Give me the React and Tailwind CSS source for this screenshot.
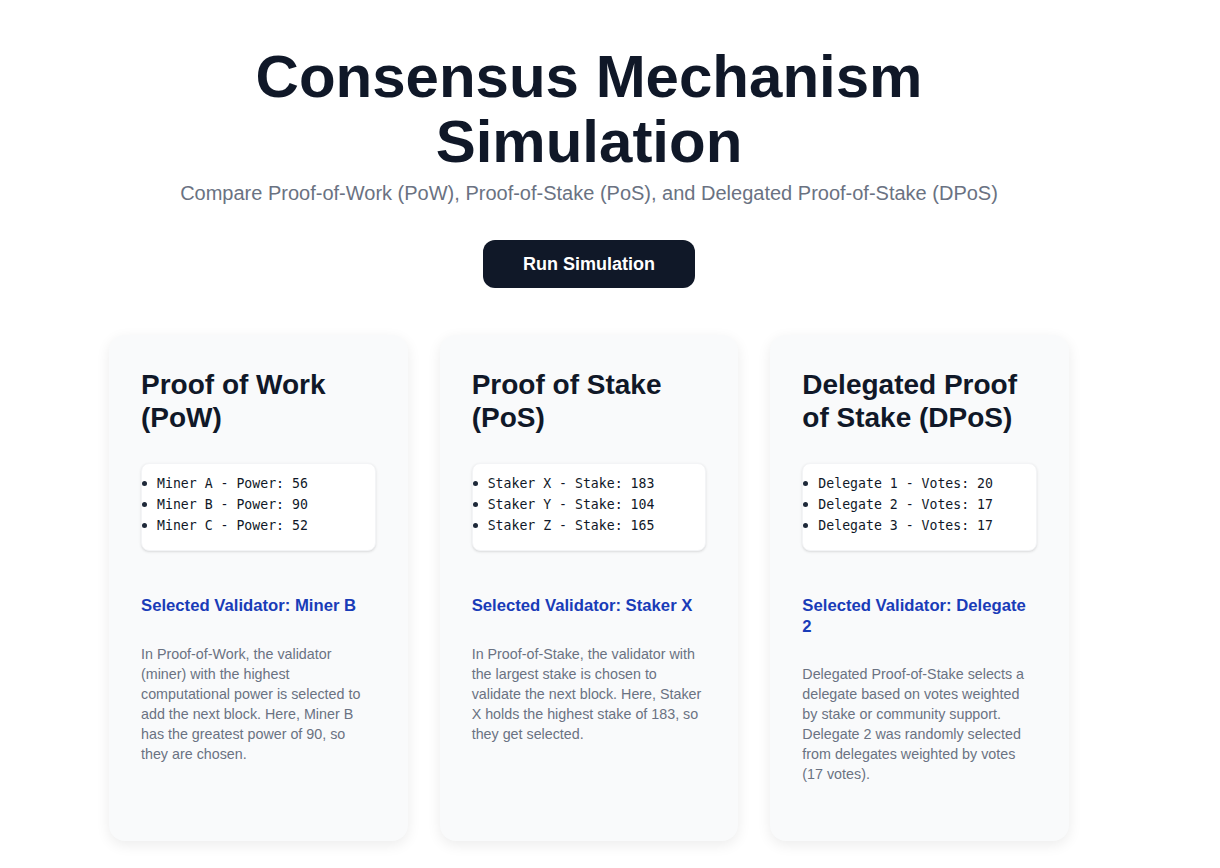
import React from 'react'

const mechanisms = [
  {
    title: 'Proof of Work (PoW)',
    items: ['Miner A - Power: 56', 'Miner B - Power: 90', 'Miner C - Power: 52'],
    selected: 'Miner B',
    text: 'In Proof-of-Work, the validator (miner) with the highest computational power is selected to add the next block. Here, Miner B has the greatest power of 90, so they are chosen.',
  },
  {
    title: 'Proof of Stake (PoS)',
    items: ['Staker X - Stake: 183', 'Staker Y - Stake: 104', 'Staker Z - Stake: 165'],
    selected: 'Staker X',
    text: 'In Proof-of-Stake, the validator with the largest stake is chosen to validate the next block. Here, Staker X holds the highest stake of 183, so they get selected.',
  },
  {
    title: 'Delegated Proof of Stake (DPoS)',
    items: ['Delegate 1 - Votes: 20', 'Delegate 2 - Votes: 17', 'Delegate 3 - Votes: 17'],
    selected: 'Delegate 2',
    text: 'Delegated Proof-of-Stake selects a delegate based on votes weighted by stake or community support. Delegate 2 was randomly selected from delegates weighted by votes (17 votes).',
  },
]

function MechanismCard({ title, items, selected, text }) {
  return (
    <div className="bg-gray-50 rounded-2xl shadow-[0_4px_14px_rgba(0,0,0,0.08)] px-8 pt-8 pb-[57px]">
      <h2 className="text-[28px] leading-[33px] mt-[1px] font-bold text-gray-900">{title}</h2>

      {/* participants */}
      <div className="mt-[29px] bg-white rounded-lg border border-gray-100 shadow-sm pt-[9px] pb-[14px]">
        <ul className="font-['DejaVu_Sans_Mono',monospace] text-[13.2px] leading-[21px] text-gray-900">
          {items.map((item) => (
            <li key={item} className="flex items-center">
              <span className="w-[5px] h-[5px] mr-[10px] rounded-full bg-gray-800" />
              <span>{item}</span>
            </li>
          ))}
        </ul>
      </div>

      <h3 className="mt-[45px] text-[16.7px] leading-[20.6px] font-bold text-blue-800">
        Selected Validator: {selected}
      </h3>
      <p className="mt-[27px] text-[14.3px] leading-5 text-gray-500">{text}</p>
    </div>
  )
}

export default function App() {
  return (
    <div className="min-h-screen bg-white font-['Liberation_Sans',Arial,sans-serif]">
      <div className="w-[1178px]">
        <div className="max-w-5xl mx-auto px-8 pt-[44px] pb-8 text-center">
          <h1 className="text-6xl leading-[65px] font-bold text-gray-900">
            Consensus Mechanism Simulation
          </h1>
          <p className="mt-[5px] text-xl text-gray-500">
            Compare Proof-of-Work (PoW), Proof-of-Stake (PoS), and Delegated Proof-of-Stake (DPoS)
          </p>

          <button className="mt-[33px] h-12 px-10 rounded-xl bg-gray-900 text-white text-lg font-bold">
            Run Simulation
          </button>

          <div className="mt-[47px] grid grid-cols-3 gap-8 text-left">
            {mechanisms.map((m) => (
              <MechanismCard key={m.title} {...m} />
            ))}
          </div>
        </div>
      </div>
    </div>
  )
}
